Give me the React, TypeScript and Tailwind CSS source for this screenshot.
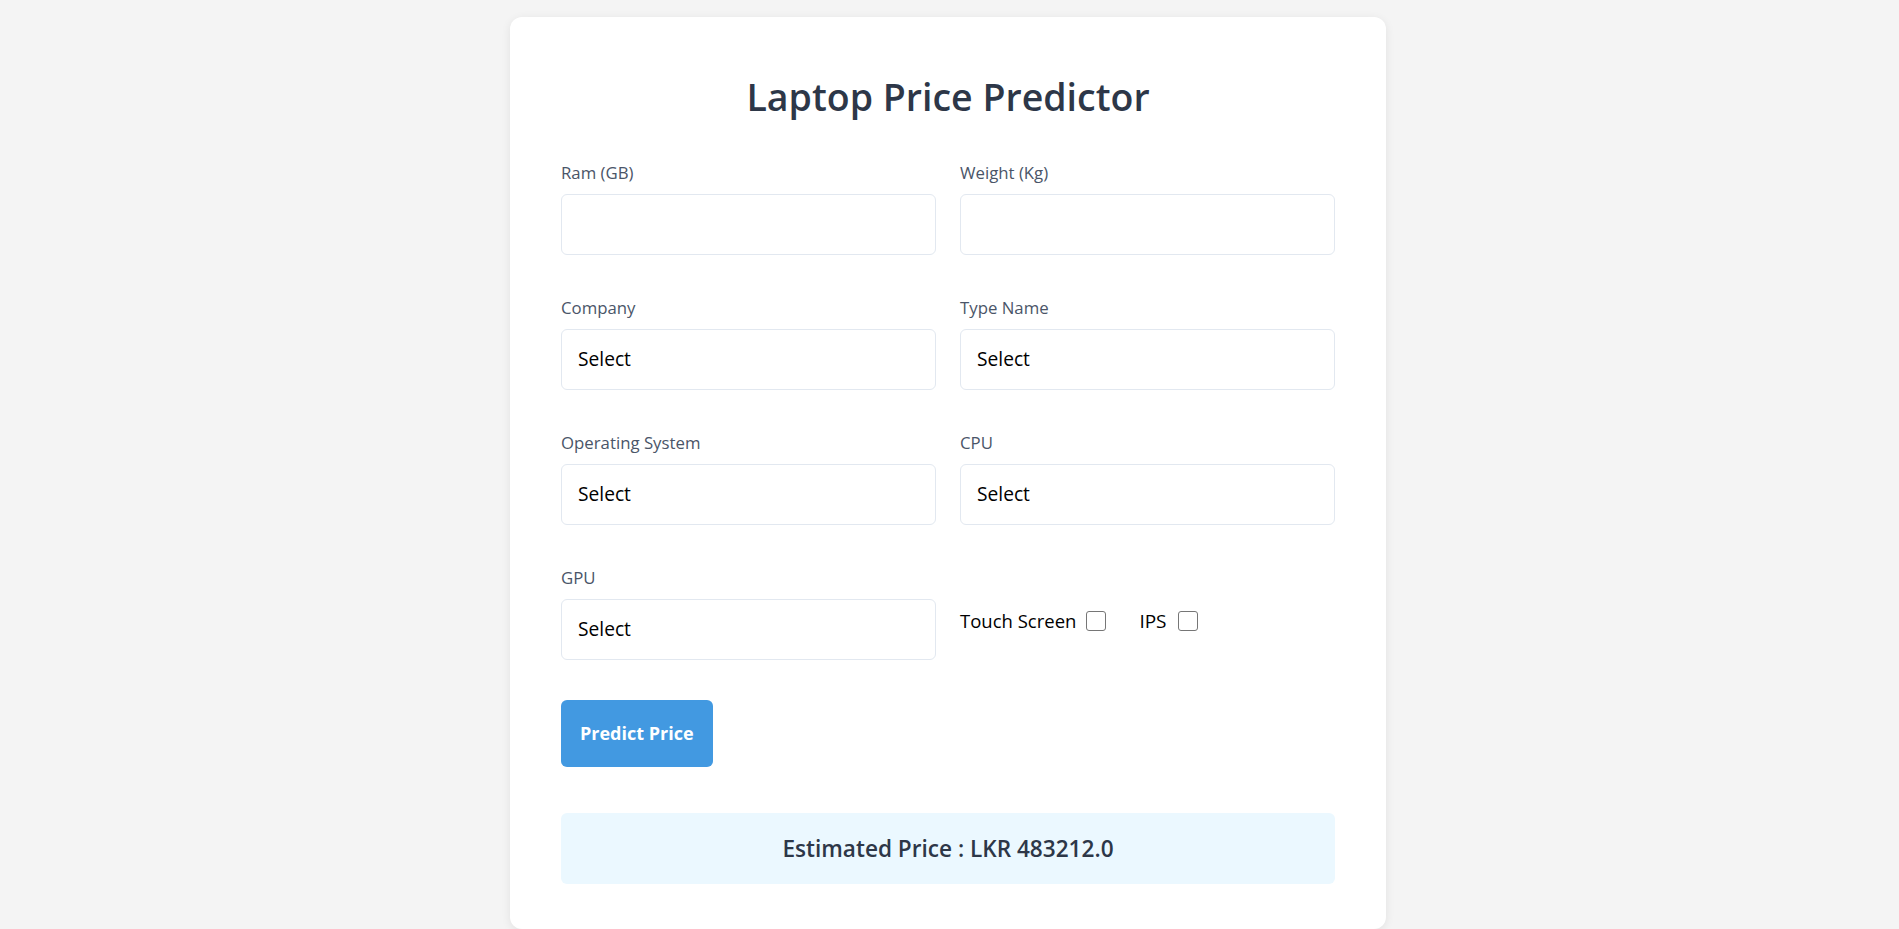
import React, { useState } from 'react';

const companies = ['Apple', 'Asus', 'Dell', 'HP', 'Lenovo', 'MSI', 'Acer', 'Toshiba'];
const typeNames = ['Notebook', 'Ultrabook', 'Gaming', '2 in 1 Convertible', 'Workstation', 'Netbook'];
const osList = ['Windows', 'Mac', 'Linux', 'Others/No OS/Chrome OS'];
const cpus = ['Intel Core i7', 'Intel Core i5', 'Intel Core i3', 'Other Intel Processor', 'AMD Processor'];
const gpus = ['Intel', 'Nvidia', 'AMD'];

const labelCls = 'block text-[16.8px] leading-[21px] mb-[11px] text-[#4a5568]';
const boxCls =
  'w-full h-[61px] border border-[#e2e8f0] rounded-[6px] bg-white px-[16px] text-[19.2px] text-black outline-none';

interface SelectFieldProps {
  label: string;
  options: string[];
  value: string;
  onChange: (v: string) => void;
}

const SelectField: React.FC<SelectFieldProps> = ({ label, options, value, onChange }) => {
  return (
    <div>
      <label className={labelCls}>{label}</label>
      <select
        value={value}
        onChange={(e) => onChange(e.target.value)}
        className={boxCls + ' appearance-none'}
      >
        <option value="">Select</option>
        {options.map((o) => (
          <option key={o} value={o}>
            {o}
          </option>
        ))}
      </select>
    </div>
  );
};

export default function App() {
  const [ram, setRam] = useState('');
  const [weight, setWeight] = useState('');
  const [company, setCompany] = useState('');
  const [typeName, setTypeName] = useState('');
  const [os, setOs] = useState('');
  const [cpu, setCpu] = useState('');
  const [gpu, setGpu] = useState('');
  const [touch, setTouch] = useState(false);
  const [ips, setIps] = useState(false);
  const [price] = useState('483212.0');

  return (
    <div
      className="min-h-screen bg-[#f4f4f4] pt-[17px] flex justify-center pr-[3px]"
      style={{ fontFamily: '"Open Sans", "Noto Sans", sans-serif' }}
    >
      <div className="w-[876px] h-fit bg-white rounded-[12px] shadow-[0_2px_10px_rgba(0,0,0,0.08)] px-[51px] pt-[56px] pb-[45px]">
        <h1 className="text-center text-[37.5px] leading-[48px] font-semibold text-[#2d3748] mb-[41px]">
          Laptop Price Predictor
        </h1>

        <div className="grid grid-cols-2 gap-x-[24px] gap-y-[42px]">
          <div>
            <label className={labelCls}>Ram (GB)</label>
            <input type="number" value={ram} onChange={(e) => setRam(e.target.value)} className={boxCls} />
          </div>
          <div>
            <label className={labelCls}>Weight (Kg)</label>
            <input type="number" value={weight} onChange={(e) => setWeight(e.target.value)} className={boxCls} />
          </div>

          <SelectField label="Company" options={companies} value={company} onChange={setCompany} />
          <SelectField label="Type Name" options={typeNames} value={typeName} onChange={setTypeName} />

          <SelectField label="Operating System" options={osList} value={os} onChange={setOs} />
          <SelectField label="CPU" options={cpus} value={cpu} onChange={setCpu} />

          <SelectField label="GPU" options={gpus} value={gpu} onChange={setGpu} />
          <div className="flex items-center h-[20px] mt-[44px] text-[18.5px] text-black">
            <span>Touch Screen</span>
            <input
              type="checkbox"
              checked={touch}
              onChange={(e) => setTouch(e.target.checked)}
              className="appearance-none w-[20px] h-[20px] ml-[10px] border border-[#767676] rounded-[3px] bg-white checked:bg-[#4299e1]"
            />
            <span className="ml-[33px] text-[19px]">IPS</span>
            <input
              type="checkbox"
              checked={ips}
              onChange={(e) => setIps(e.target.checked)}
              className="appearance-none w-[20px] h-[20px] ml-[11px] border border-[#767676] rounded-[3px] bg-white checked:bg-[#4299e1]"
            />
          </div>
        </div>

        <button className="mt-[40px] h-[67px] px-[19px] rounded-[6px] bg-[#4299e1] text-white text-[18px] font-bold">
          Predict Price
        </button>

        <div className="mt-[46px] h-[71px] rounded-[6px] bg-[#ebf8ff] flex items-center justify-center">
          <span className="text-[22.6px] font-semibold text-[#2d3748]">Estimated Price : LKR {price}</span>
        </div>
      </div>
    </div>
  );
}
